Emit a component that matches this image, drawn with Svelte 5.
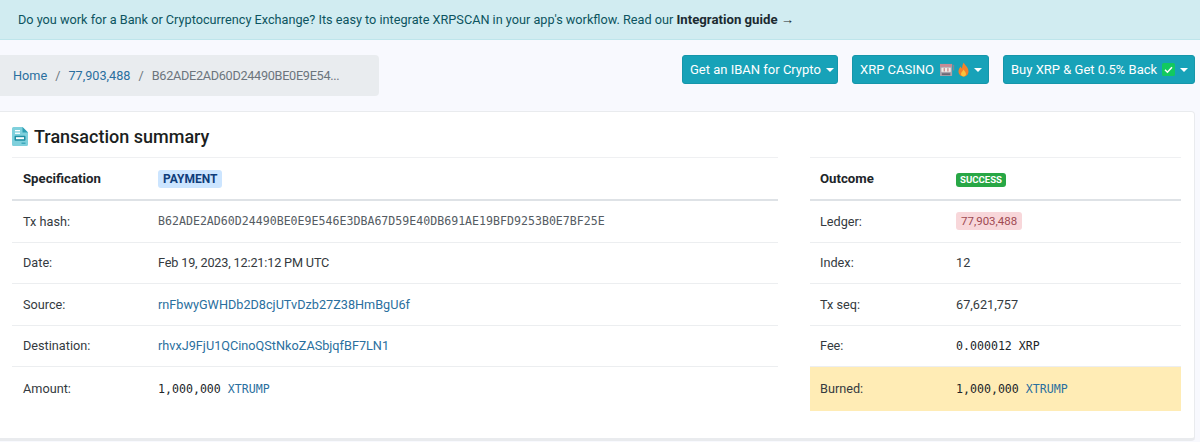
<script>
	const leftRows = [
		{ label: "Tx hash:", value: "B62ADE2AD60D24490BE0E9E546E3DBA67D59E40DB691AE19BFD9253B0E7BF25E", kind: "hash" },
		{ label: "Date:", value: "Feb 19, 2023, 12:21:12 PM UTC", kind: "date" },
		{ label: "Source:", value: "rnFbwyGWHDb2D8cjUTvDzb27Z38HmBgU6f", kind: "link" },
		{ label: "Destination:", value: "rhvxJ9FjU1QCinoQStNkoZASbjqfBF7LN1", kind: "link" },
	];
	const rightRows = [
		{ label: "Index:", value: "12" },
		{ label: "Tx seq:", value: "67,621,757" },
	];
</script>

<div class="alert">
	Do you work for a Bank or Cryptocurrency Exchange? Its easy to integrate XRPSCAN in your app's workflow. Read our <b>Integration guide →</b>
</div>

<div class="top-row">
	<nav class="breadcrumb">
		<a href="#home">Home</a>
		<span class="sep">/</span>
		<a href="#ledger">77,903,488</a>
		<span class="sep">/</span>
		<span class="current">B62ADE2AD60D24490BE0E9E54...</span>
	</nav>
	<div class="actions">
		<button class="btn iban">Get an IBAN for Crypto<i class="caret"></i></button>
		<button class="btn casino">
			<span>XRP CASINO</span>
			<svg class="emoji" width="16" height="14" viewBox="0 0 17 15">
				<rect x="1" y="1" width="13" height="13" rx="1" fill="#a9a3ad" />
				<rect x="1" y="1" width="13" height="3" fill="#c98a94" />
				<rect x="2.5" y="5" width="10" height="4.5" fill="#f1ece6" />
				<rect x="5" y="5.5" width="1" height="3.5" fill="#b8606a" />
				<rect x="9" y="5.5" width="1" height="3.5" fill="#b8606a" />
				<rect x="3" y="11" width="9" height="2" fill="#6c6772" />
				<rect x="15" y="2" width="1.2" height="6" fill="#8a8590" />
			</svg>
			<svg class="emoji fire" width="11" height="15" viewBox="0 0 11 15">
				<path d="M5.8 0.5C6.3 3 10.5 5 10.5 9.5C10.5 12.6 8.2 14.5 5.5 14.5C2.8 14.5 0.5 12.6 0.5 9.6C0.5 7.2 1.8 5.8 2.6 4.6C3 5.6 3.4 6.2 4 6.4C4.3 4.4 4.6 2.2 5.8 0.5Z" fill="#f4822a" />
				<path d="M5.5 7.5C6.2 9 8 10 8 12C8 13.4 6.8 14.5 5.5 14.5C4.2 14.5 3 13.4 3 12C3 10.2 4.8 9.2 5.5 7.5Z" fill="#fbc23c" />
			</svg>
			<i class="caret"></i>
		</button>
		<button class="btn buy">
			<span>Buy XRP &amp; Get 0.5% Back</span>
			<svg class="emoji" width="13" height="13" viewBox="0 0 13 13">
				<rect width="13" height="13" rx="1.5" fill="#12c95f" />
				<path d="M3 6.8L5.4 9.2L10 4.2" fill="none" stroke="#fff" stroke-width="1.5" />
			</svg>
			<i class="caret"></i>
		</button>
	</div>
</div>

<section class="card">
	<h2>
		<svg width="16" height="19" viewBox="0 0 16 19">
			<path d="M1.5 0H10.5L16 5.5V17.5A1.5 1.5 0 0 1 14.5 19H1.5A1.5 1.5 0 0 1 0 17.5V1.5A1.5 1.5 0 0 1 1.5 0Z" fill="#7fd0dc" />
			<path d="M10.5 0L16 5.5H10.5Z" fill="#2e9fb3" />
			<rect x="3" y="3" width="5" height="1.3" fill="#fff" />
			<rect x="3" y="5.6" width="5" height="1.3" fill="#fff" />
			<rect x="2.5" y="8.7" width="11" height="5" rx="1" fill="#1f8ea3" />
			<rect x="4" y="10.2" width="8" height="2" fill="#fff" />
			<rect x="9.5" y="15.6" width="4" height="1.2" fill="#2e9fb3" />
		</svg>
		Transaction summary
	</h2>

	<div class="columns">
		<div class="table left">
			<div class="row head">
				<span class="label">Specification</span>
				<span><span class="badge payment">PAYMENT</span></span>
			</div>
			{#each leftRows as row}
				<div class="row">
					<span class="label">{row.label}</span>
					{#if row.kind === "link"}
						<a href="#account">{row.value}</a>
					{:else}
						<span class:hash={row.kind === "hash"} class:date={row.kind === "date"}>{row.value}</span>
					{/if}
				</div>
			{/each}
			<div class="row last">
				<span class="label">Amount:</span>
				<span class="mono">1,000,000 <a href="#token">XTRUMP</a></span>
			</div>
		</div>

		<div class="table right">
			<div class="row head">
				<span class="label">Outcome</span>
				<span><span class="badge success">SUCCESS</span></span>
			</div>
			<div class="row">
				<span class="label">Ledger:</span>
				<span><span class="ledger">77,903,488</span></span>
			</div>
			{#each rightRows as row}
				<div class="row">
					<span class="label">{row.label}</span>
					<span>{row.value}</span>
				</div>
			{/each}
			<div class="row">
				<span class="label">Fee:</span>
				<span class="mono">0.000012 XRP</span>
			</div>
			<div class="row last burned">
				<span class="label">Burned:</span>
				<span class="mono">1,000,000 <a href="#token">XTRUMP</a></span>
			</div>
		</div>
	</div>
</section>

<style>
	:global(body) {
		margin: 0;
		background: #f8f9fe;
		color: #343a40;
		font-family: Roboto, "Open Sans", sans-serif;
		font-size: 12.7px;
		height: 442px;
		overflow: hidden;
	}

	a {
		color: #2a6f9e;
		text-decoration: none;
	}

	.alert {
		height: 40px;
		box-sizing: border-box;
		padding: 10px 18px 0;
		background: #d1ecf1;
		border-bottom: 1px solid #bee5eb;
		color: #0c5460;
		line-height: 20px;
	}

	.alert b {
		color: #1b2a30;
		font-size: 13.2px;
	}

	.top-row {
		display: flex;
		justify-content: space-between;
		align-items: flex-start;
		padding: 15px 5px 0 0;
	}

	.breadcrumb {
		display: flex;
		align-items: center;
		width: 379px;
		height: 41px;
		box-sizing: border-box;
		padding-left: 13px;
		gap: 8px;
		background: #e9ecef;
		border-radius: 0 4px 4px 0;
	}

	.sep,
	.current {
		color: #6c757d;
	}

	.current {
		letter-spacing: -0.3px;
	}

	.actions {
		display: flex;
		gap: 14px;
	}

	.btn {
		display: flex;
		align-items: center;
		justify-content: flex-start;
		gap: 5px;
		height: 29px;
		padding: 0 7px;
		background: #17a2b8;
		border: 1px solid #1596aa;
		border-radius: 3px;
		color: #fff;
		font: inherit;
		font-size: 13px;
		white-space: nowrap;
	}

	.iban {
		width: 156px;
	}

	.casino {
		width: 137px;
	}

	.buy {
		width: 192px;
	}

	.emoji {
		flex-shrink: 0;
	}

	.caret {
		flex-shrink: 0;
		width: 0;
		height: 0;
		margin-left: auto;
		border-top: 4px solid #fff;
		border-left: 4px solid transparent;
		border-right: 4px solid transparent;
	}

	.fire {
		margin-left: -2px;
	}

	.card {
		margin: 15px 5px 0 0;
		height: 330px;
		box-sizing: border-box;
		padding: 0 13px 0 12px;
		background: #fff;
		border: 1px solid #e9ebee;
		border-left: 0;
		border-radius: 0 4px 4px 0;
		border-bottom-width: 3px;
	}

	h2 {
		display: flex;
		align-items: center;
		gap: 6px;
		height: 45px;
		margin: 0;
		padding-top: 4px;
		box-sizing: border-box;
		font-size: 18px;
		font-weight: 500;
		color: #1b1e21;
	}

	.columns {
		display: grid;
		grid-template-columns: 766px 371px;
		column-gap: 32px;
	}

	.table {
		border-top: 1px solid #eff0f2;
	}

	.row {
		display: grid;
		height: 41.5px;
		box-sizing: border-box;
		align-items: center;
		padding-left: 11px;
		border-bottom: 1px solid #eceef0;
	}

	.left .row {
		grid-template-columns: 135px 1fr;
	}

	.right .row {
		grid-template-columns: 136px 1fr;
		padding-left: 10px;
	}

	.row.last {
		height: 43.5px;
		border-bottom: 0;
	}

	.row.head {
		height: 43px;
		border-bottom: 2px solid #dee2e6;
	}

	.head .label {
		font-size: 13.2px;
		font-weight: 700;
		color: #212529;
	}

	.date {
		letter-spacing: -0.17px;
	}

	.badge {
		display: inline-block;
		font-weight: 700;
		border-radius: 3px;
	}

	.payment {
		padding: 0 5px;
		background: #cce5ff;
		color: #0f3d7a;
		font-size: 12px;
		line-height: 18px;
	}

	.success {
		padding: 0 4px;
		background: #28a745;
		color: #fff;
		font-size: 9.6px;
		line-height: 14px;
	}

	.ledger {
		display: inline-block;
		padding: 2px 5px;
		background: #f8d7da;
		border-radius: 3px;
		color: #a04a52;
		font-size: 11.5px;
	}

	.hash,
	.mono {
		font-family: "DejaVu Sans Mono", monospace;
		font-size: 11.6px;
	}

	.hash {
		color: #555c63;
	}

	.mono {
		color: #212529;
	}

	.burned {
		background: #ffecb5;
	}
</style>
